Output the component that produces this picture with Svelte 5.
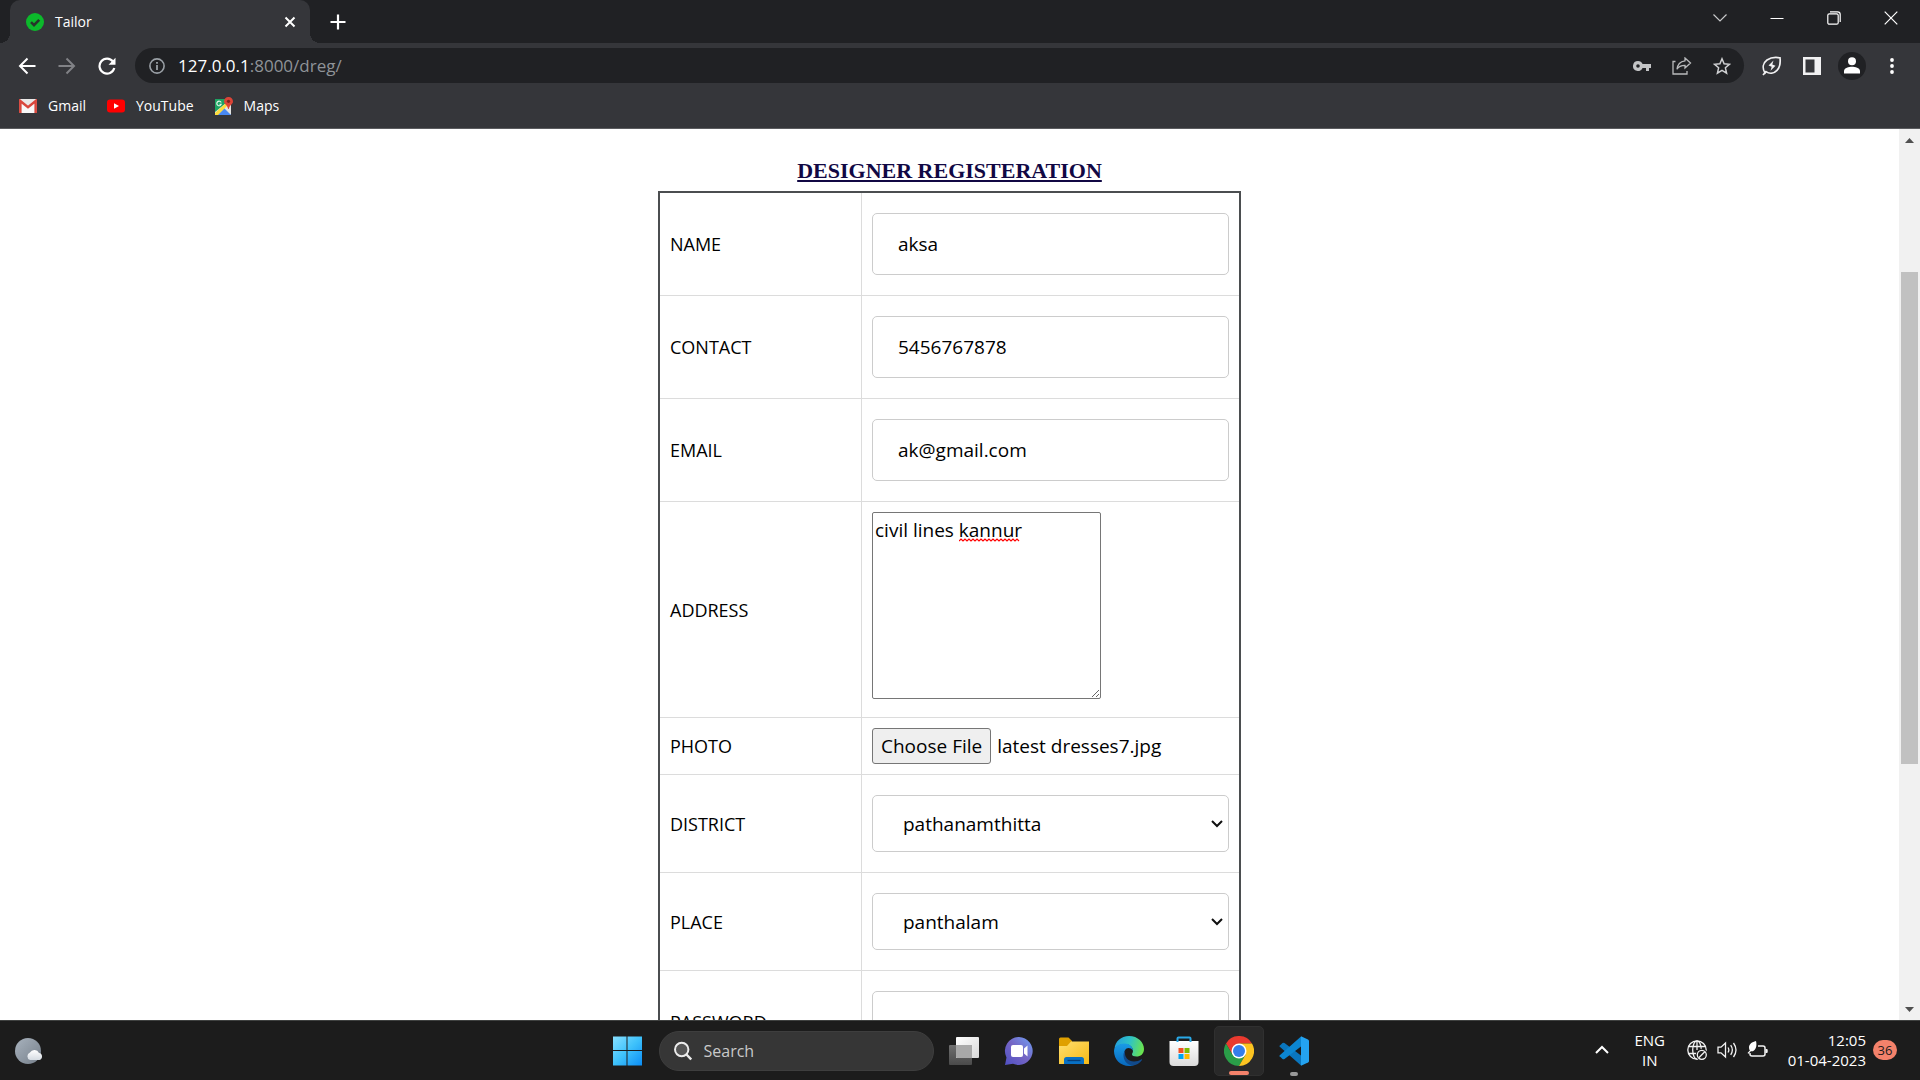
<script>
  import { onMount } from 'svelte';

  let name = $state('aksa');
  let contact = $state('5456767878');
  let email = $state('ak@gmail.com');
  let address = $state('civil lines kannur');
  let password = $state('');
  let fileInput;

  onMount(() => {
    const transfer = new DataTransfer();
    transfer.items.add(new File(['photo'], 'latest dresses7.jpg', { type: 'image/jpeg' }));
    fileInput.files = transfer.files;
  });
</script>

<div class="screen">
  <header class="browser">
    <div class="tabstrip">
      <div class="tab">
        <svg class="favicon" width="18" height="18" viewBox="0 0 18 18"><circle cx="9" cy="9" r="9" fill="#0cb92b" /><path d="M5 9.2l3 3 5.2-5.4" fill="none" stroke="#26352a" stroke-width="2.6" /></svg>
        <span class="tab-title">Tailor</span>
        <button class="plain close-tab" aria-label="Close tab"><svg width="12" height="12" viewBox="0 0 12 12"><path d="M1.500 1.500l9 9M10.500 1.500l-9 9" stroke="#fff" stroke-width="2" /></svg></button>
      </div>
      <button class="plain new-tab" aria-label="New tab"><svg width="16" height="16" viewBox="0 0 16 16"><path d="M8 .5v15M.5 8h15" stroke="#fff" stroke-width="2.200" /></svg></button>
      <div class="window-buttons">
        <button class="plain" aria-label="Search tabs"><svg width="14" height="8" viewBox="0 0 14 8"><path d="M.5.5L7 7 13.500.5" fill="none" stroke="#c8c9cb" stroke-width="1.200" /></svg></button>
        <button class="plain" aria-label="Minimize"><svg width="14" height="14" viewBox="0 0 14 14"><path d="M.5 7.500h13" stroke="#fff" /></svg></button>
        <button class="plain" aria-label="Restore"><svg width="14" height="14" viewBox="0 0 14 14" fill="none" stroke="#fff" stroke-width="1.200"><rect x=".8" y="2.800" width="10.400" height="10.400" rx="1.500" /><path d="M3 .8h7.500q2.700 0 2.700 2.700V11" /></svg></button>
        <button class="plain" aria-label="Close"><svg width="14" height="14" viewBox="0 0 14 14"><path d="M.7.7l12.600 12.600M13.300.7L.7 13.300" stroke="#fff" stroke-width="1.200" /></svg></button>
      </div>
    </div>

    <div class="toolbar">
      <div class="nav">
        <button class="plain" aria-label="Back"><svg width="18" height="18" viewBox="0 0 18 18"><path d="M9.500 1.500L2 9l7.500 7.500M2 9h15.500" fill="none" stroke="#fff" stroke-width="2" /></svg></button>
        <button class="plain" aria-label="Forward"><svg width="18" height="18" viewBox="0 0 18 18"><path d="M8.500 1.500L16 9l-7.500 7.500M16 9H.5" fill="none" stroke="#818286" stroke-width="2" /></svg></button>
        <button class="plain" aria-label="Reload"><svg width="18" height="18" viewBox="0 0 18 18"><path d="M15 4.500A7.500 7.500 0 1 0 16.300 11" fill="none" stroke="#fff" stroke-width="2.200" /><path d="M17.500.8v7h-7z" fill="#fff" /></svg></button>
      </div>
      <div class="address-bar">
        <svg width="16" height="16" viewBox="0 0 16 16"><circle cx="8" cy="8" r="7.100" fill="none" stroke="#9aa0a6" stroke-width="1.600" /><path d="M8 7v5M8 4v1.800" stroke="#9aa0a6" stroke-width="1.800" /></svg>
        <a class="url" href="#dreg"><span>127.0.0.1</span>:8000/dreg/</a>
        <div class="bar-icons">
          <button class="plain" aria-label="Passwords"><svg width="18" height="10" viewBox="0 0 18 10"><path fill="#c3c4c6" fill-rule="evenodd" d="M5 0a5 5 0 1 0 4.600 7H13v3h3V7h2V3H9.600A5 5 0 0 0 5 0zm0 3.200a1.800 1.800 0 1 1 0 3.600 1.800 1.800 0 0 1 0-3.600z" /></svg></button>
          <button class="plain" aria-label="Share"><svg width="20" height="18" viewBox="0 0 20 18" fill="none" stroke="#b9babc" stroke-width="1.300"><path d="M3.500 4.500H1V17h14v-3" /><path d="M13 1l5.500 5L13 11V8.300c-4 0-6.500 1.200-8 4 .4-4.500 3-7.800 8-8.500z" /></svg></button>
          <button class="plain" aria-label="Bookmark"><svg width="18" height="18" viewBox="0 0 18 18"><path d="M9 1.800l2.100 5 5.300.5-4 3.500 1.200 5.300L9 13.300l-4.600 2.800 1.200-5.300-4-3.500 5.300-.5z" fill="none" stroke="#cfd0d2" stroke-width="1.500" /></svg></button>
        </div>
      </div>
      <div class="actions">
        <button class="plain" aria-label="Energy saver"><svg width="20" height="20" viewBox="0 0 20 20" fill="none" stroke="#f1f1f2" stroke-width="1.700"><path d="M3 17C0 12 1 7 5 4c4-2.700 9-3 13-2.200.6 5 0 9.500-3 12.600-3 3.200-7.500 3.800-11 1.200z" /><path d="M1 19l3-3.500" /><path d="M11.500 4.500L6.500 9.500l3.200 1.200-1.200 4 5-5-3.200-1.200z" fill="#f1f1f2" stroke="none" /></svg></button>
        <button class="plain" aria-label="Side panel"><svg width="18" height="18" viewBox="0 0 18 18"><path fill="#f1f1f2" fill-rule="evenodd" d="M0 0h18v18H0zM2.500 2.500v13h9v-13z" /></svg></button>
        <button class="plain avatar" aria-label="Profile"><svg width="16" height="17" viewBox="0 0 16 17" fill="#fff"><circle cx="8" cy="4.300" r="4" /><path d="M0 16.500v-2.500c0-3 5-4.300 8-4.300s8 1.300 8 4.300v2.500z" /></svg></button>
        <button class="plain" aria-label="Menu"><svg width="4" height="16" viewBox="0 0 4 16" fill="#fff"><circle cx="2" cy="2" r="1.900" /><circle cx="2" cy="8" r="1.900" /><circle cx="2" cy="14" r="1.900" /></svg></button>
      </div>
    </div>

    <nav class="bookmarks">
      <a href="#gmail"><svg width="18" height="14" viewBox="0 0 18 14"><rect width="18" height="14" rx="1.500" fill="#e9e8e7" /><path d="M3 14V4l6 5 6-5v10z" fill="#f8f8f8" /><path d="M1.300 14V2L9 8.200 16.700 2v12" fill="none" stroke="#d9473d" stroke-width="2.500" /></svg>Gmail</a>
      <a href="#youtube"><svg width="18" height="14" viewBox="0 0 18 14"><rect width="18" height="13" y=".5" rx="3" fill="#f00" /><path d="M7 4.200v5.600L12 7z" fill="#fff" /></svg>YouTube</a>
      <a href="#maps"><svg width="18" height="18" viewBox="0 0 18 18"><rect y="2" width="16" height="16" rx="1" fill="#e3e3e1" /><path d="M0 2h11v4L0 15z" fill="#1da362" /><path d="M2 18l7-7 7 7z" fill="#4889f4" /><path d="M0 16L11 6l2 2L3 18H0z" fill="#fddc3c" /><path d="M6.200 5.500A2.300 2.300 0 1 0 6.300 7.200H4.500" fill="none" stroke="#e8f5ec" stroke-width="1.100" /><path d="M13.500 0A4.400 4.400 0 0 0 9 4.400c0 2.600 3.500 3.500 4.200 7.600h.6C14.500 7.900 18 7 18 4.400A4.400 4.400 0 0 0 13.500 0z" fill="#db4437" /><circle cx="13.500" cy="4.300" r="1.600" fill="#7b231d" /></svg>Maps</a>
    </nav>
  </header>

  <div class="viewport">
    <main>
      <h1>DESIGNER REGISTERATION</h1>
      <form>
        <table>
          <tbody>
            <tr><td><label for="name">NAME</label></td><td><input id="name" class="field" type="text" bind:value={name} /></td></tr>
            <tr><td><label for="contact">CONTACT</label></td><td><input id="contact" class="field" type="text" bind:value={contact} /></td></tr>
            <tr><td><label for="email">EMAIL</label></td><td><input id="email" class="field" type="text" bind:value={email} /></td></tr>
            <tr>
              <td><label for="address">ADDRESS</label></td>
              <td>
                <div class="area">
                  <textarea id="address" spellcheck="false" bind:value={address}></textarea>
                  <svg class="squiggle" width="61" height="4" viewBox="0 0 61 4"><path d="M0 3l2-2 2 2 2-2 2 2 2-2 2 2 2-2 2 2 2-2 2 2 2-2 2 2 2-2 2 2 2-2 2 2 2-2 2 2 2-2 2 2 2-2 2 2 2-2 2 2 2-2 2 2 2-2 2 2 2-2 2 2" fill="none" stroke="#f00" stroke-width="1.200" /></svg>
                </div>
              </td>
            </tr>
            <tr><td><label for="photo">PHOTO</label></td><td><input id="photo" type="file" bind:this={fileInput} /></td></tr>
            <tr>
              <td><label for="district">DISTRICT</label></td>
              <td><div class="select"><select id="district" class="field"><option>pathanamthitta</option></select><svg width="12" height="8" viewBox="0 0 12 8"><path d="M1 1l5 5 5-5" fill="none" stroke="#101010" stroke-width="2" /></svg></div></td>
            </tr>
            <tr>
              <td><label for="place">PLACE</label></td>
              <td><div class="select"><select id="place" class="field"><option>panthalam</option></select><svg width="12" height="8" viewBox="0 0 12 8"><path d="M1 1l5 5 5-5" fill="none" stroke="#101010" stroke-width="2" /></svg></div></td>
            </tr>
            <tr><td><label for="password">PASSWORD</label></td><td><input id="password" class="field" type="password" bind:value={password} /></td></tr>
          </tbody>
        </table>
      </form>
    </main>
    <div class="scrollbar">
      <svg class="arrow" width="21" height="21" viewBox="0 0 21 21"><path d="M6 14l4.500-5 4.500 5z" fill="#505050" /></svg>
      <div class="before"></div>
      <div class="thumb"></div>
      <div class="after"></div>
      <svg class="arrow" width="21" height="21" viewBox="0 0 21 21"><path d="M6 8l4.500 5L15 8z" fill="#505050" /></svg>
    </div>
  </div>

  <footer class="taskbar">
    <div class="widgets">
      <button class="plain" aria-label="Weather">
        <svg width="28" height="26" viewBox="0 0 28 26">
          <defs>
            <linearGradient id="moon" x1="0" y1="0" x2="1" y2="1"><stop offset="0" stop-color="#a8b2bd" /><stop offset="1" stop-color="#76808b" /></linearGradient>
            <linearGradient id="cloud" x1="0" y1="0" x2="0" y2="1"><stop offset="0" stop-color="#fff" /><stop offset="1" stop-color="#d5dbe2" /></linearGradient>
          </defs>
          <circle cx="13" cy="13" r="13" fill="url(#moon)" />
          <path d="M15 22a4 4 0 0 1 0-7.500 5 5 0 0 1 9 .5 3.600 3.600 0 0 1 .5 7z" fill="url(#cloud)" />
        </svg>
      </button>
    </div>

    <div class="apps">
      <button class="plain tile" aria-label="Start">
        <svg width="30" height="30" viewBox="0 0 30 30">
          <defs><linearGradient id="win" gradientUnits="userSpaceOnUse" x1="0" y1="0" x2="30" y2="30"><stop offset="0" stop-color="#8be1ff" /><stop offset=".5" stop-color="#3fc2fb" /><stop offset="1" stop-color="#0a8cf5" /></linearGradient></defs>
          <path fill="url(#win)" d="M1 .5h13.500V14H1zM15.500.5H30V14H15.500zM1 15h13.500v14.500H1zM15.500 15H30v14.500H15.500z" />
        </svg>
      </button>
      <label class="search">
        <svg width="18" height="20" viewBox="0 0 18 20"><circle cx="7.700" cy="8.500" r="6.700" fill="#555" stroke="#ececec" stroke-width="2" /><path d="M12.500 13.500l4.700 5" stroke="#ececec" stroke-width="2.400" /></svg>
        <input type="text" placeholder="Search" aria-label="Search" />
      </label>
      <button class="plain tile" aria-label="Task view">
        <svg width="30" height="30" viewBox="0 0 30 30">
          <defs>
            <linearGradient id="tv" x1="0" y1="0" x2="1" y2="1"><stop offset="0" stop-color="#fff" /><stop offset="1" stop-color="#d9d9d9" /></linearGradient>
            <linearGradient id="tv2" x1="0" y1="0" x2="0" y2="1"><stop offset="0" stop-color="#707070" /><stop offset="1" stop-color="#4a4a4a" /></linearGradient>
          </defs>
          <rect y="9" width="23" height="20" rx="1" fill="url(#tv2)" /><rect x="7" y="1" width="23" height="21" rx="1" fill="url(#tv)" /><path d="M7 9h16v13H8l-1-1z" fill="#a9a9a9" />
        </svg>
      </button>
      <button class="plain tile" aria-label="Chat">
        <svg width="30" height="30" viewBox="0 0 30 30">
          <defs><linearGradient id="chat" x1="0" y1="1" x2="1" y2="0"><stop offset="0" stop-color="#4f50c4" /><stop offset=".5" stop-color="#7565c4" /><stop offset="1" stop-color="#6fa0f5" /></linearGradient></defs>
          <path d="M15 1a14 14 0 1 1-6 26.800L1 29l1.500-7.500A14 14 0 0 1 15 1z" fill="url(#chat)" /><rect x="7" y="9" width="12" height="12" rx="2" fill="#fff" /><path d="M20 12.500L23.500 9.500v11L20 17.500z" fill="#fff" />
        </svg>
      </button>
      <button class="plain tile" aria-label="File Explorer">
        <svg width="30" height="30" viewBox="0 0 30 30">
          <defs><linearGradient id="folder" x1="0" y1="0" x2="1" y2="1"><stop offset="0" stop-color="#ffdf70" /><stop offset="1" stop-color="#f6b914" /></linearGradient></defs>
          <path d="M0 3q0-1.500 1.500-1.500h8L13 5v6H0z" fill="#dfa000" /><path d="M0 10h8l4-4.500h18V28H0z" fill="url(#folder)" /><path d="M5 28v-4.500Q5 21 7.500 21h15q2.500 0 2.500 2.500V28z" fill="#0870c4" /><path d="M8.500 24.500h13" stroke="#053e7a" stroke-width="1.300" />
        </svg>
      </button>
      <button class="plain tile" aria-label="Edge">
        <svg width="30" height="30" viewBox="0 0 30 30">
          <defs>
            <linearGradient id="edge1" x1="0" y1=".3" x2="1" y2=".5"><stop offset="0" stop-color="#249edc" /><stop offset=".5" stop-color="#2fc3c6" /><stop offset="1" stop-color="#6be44c" /></linearGradient>
            <linearGradient id="edge2" x1="0" y1="0" x2="0" y2="1"><stop offset="0" stop-color="#1a9be6" /><stop offset="1" stop-color="#0868bd" /></linearGradient>
          </defs>
          <path d="M.5 13C1 5.500 7 0 15 0c9 0 15 6.500 15 13 0 5-3.500 7.500-7.500 7.500-3 0-4.500-1-4.500-2.300 0-.8 1-1.200 1-3.400C19 11 15.500 8 10.500 8 6 8 2.500 10 .5 13z" fill="url(#edge1)" />
          <path d="M0 15c0-4.500 5-7.500 10.500-7.500 5 0 8.500 3.500 8.500 7.200-1-2-3-2.700-4.500-2.700-3 0-4.500 3-4.500 6.500C10 24 14 28.500 20 29c-1.500.7-3 1-5 1C6.500 30 0 23.500 0 15z" fill="url(#edge2)" />
          <path d="M11.300 14.500C9.500 21 14.500 25.500 20 25.500c3 0 5-.8 7.500-2.200.6-.2.8.2.5.8-2.200 3.300-6 5.400-9 5.400C13 29 9.500 24.500 9.500 19.500c0-2 .5-4 1.800-5z" fill="#114a8b" />
        </svg>
      </button>
      <button class="plain tile" aria-label="Microsoft Store">
        <svg width="30" height="30" viewBox="0 0 30 30">
          <defs><linearGradient id="store" x1="0" y1="0" x2="0" y2="1"><stop offset="0" stop-color="#fff" /><stop offset="1" stop-color="#dadada" /></linearGradient></defs>
          <path d="M.5 5h29v21q0 4-4 4h-21q-4 0-4-4z" fill="url(#store)" /><path d="M8.500 6V2.500q0-1 1-1h11q1 0 1 1V6" fill="none" stroke="#29a9e8" stroke-width="2" /><path d="M9.500 12h5v5h-5z" fill="#f25022" /><path d="M15.500 12h5v5h-5z" fill="#7fba00" /><path d="M9.500 18h5v5h-5z" fill="#00a4ef" /><path d="M15.500 18h5v5h-5z" fill="#ffb900" />
        </svg>
      </button>
      <button class="plain tile active" aria-label="Chrome">
        <svg width="30" height="30" viewBox="0 0 30 30">
          <path d="M2 7.500A15 15 0 0 1 28 7.500H15l-6.500 11.200z" fill="#ea3a2f" /><path d="M2 7.500A15 15 0 0 0 15 30l6.500-11.300h-13z" fill="#2a9d48" /><path d="M28 7.500A15 15 0 0 1 15 30l6.500-11.300L15 7.500z" fill="#fcc421" /><circle cx="15" cy="15" r="7.500" fill="#fff" /><circle cx="15" cy="15" r="6" fill="#347eec" />
        </svg>
      </button>
      <button class="plain tile running" aria-label="Visual Studio Code">
        <svg width="30" height="30" viewBox="0 0 30 30">
          <path d="M1.500 9L3.500 7q1-.6 2 0L22 19.500V29.500L.5 10.500q-.5-1 1-1.500z" fill="#0a76be" /><path d="M1.500 21l2 2q1 .6 2 0L22 10.500V.5L.5 19.500q-.5 1 1 1.500z" fill="#0c86d1" /><path d="M22 .3l7 3.200q1 .5 1 1.500v20q0 1-1 1.500l-7 3.200z" fill="#24a3f0" />
        </svg>
      </button>
    </div>

    <div class="tray">
      <button class="plain chevron" aria-label="Show hidden icons"><svg width="14" height="9" viewBox="0 0 14 9"><path d="M1 8l6-6 6 6" fill="none" stroke="#fff" stroke-width="2" /></svg></button>
      <button class="plain lang"><span>ENG</span><span>IN</span></button>
      <button class="plain status" aria-label="Quick settings">
        <svg width="20" height="20" viewBox="0 0 20 20" fill="none" stroke="#f2f2f2" stroke-width="1.300"><circle cx="10" cy="10" r="9.200" /><ellipse cx="10" cy="10" rx="4.300" ry="9.200" /><path d="M1.500 6.500h17M1.500 13.500h9M10 1v9" /><circle cx="14.800" cy="14.800" r="6" fill="#1c1c1c" stroke="none" /><circle cx="14.800" cy="14.800" r="4.500" /><path d="M11.800 17.800l6-6" /></svg>
        <svg width="20" height="18" viewBox="0 0 20 18" fill="none" stroke="#f2f2f2" stroke-width="1.300"><path d="M1 6.200h3L8.500 2v14L4 11.800H1z" /><path d="M11 6.500q1.700 2.500 0 5M13.700 4.200q3.300 4.800 0 9.600M16.500 2q5 7 0 14" /></svg>
        <svg width="21" height="18" viewBox="0 0 21 18"><path d="M11 5h5q2 0 2 2v6q0 2-2 2H5q-2 0-2-2v-1" fill="none" stroke="#f2f2f2" stroke-width="1.500" /><path d="M18.500 8h1.200q1 0 1 1v2q0 1-1 1h-1.200z" fill="#f2f2f2" /><path d="M9 0C5 1 2 3 2 6.500c0 1.300.3 2.200.9 2.900L.5 12l1 .8 2.300-2.500C8 11 10.500 6 9 0z" fill="#fff" /></svg>
      </button>
      <button class="plain clock"><span>12:05</span><span>01-04-2023</span></button>
      <span class="badge">36</span>
    </div>
  </footer>
</div>

<style>
  :global(body) {
    margin: 0;
  }
  .screen {
    display: flex;
    flex-direction: column;
    height: 100vh;
    overflow: hidden;
    font-family: 'Open Sans', 'Noto Sans', sans-serif;
  }
  .plain {
    display: flex;
    align-items: center;
    justify-content: center;
    margin: 0;
    padding: 0;
    border: 0;
    background: none;
    color: inherit;
    font: inherit;
  }
  svg {
    display: block;
    flex: none;
  }

  /* Browser chrome */
  .browser {
    flex: none;
    border-bottom: 1px solid #5b5c5f;
    background: #35363a;
    color: #fff;
  }
  .tabstrip {
    display: flex;
    height: 43px;
    padding: 0 1px 0 10px;
    background: #202124;
  }
  .tab {
    position: relative;
    display: flex;
    align-items: center;
    box-sizing: border-box;
    width: 300px;
    padding: 0 14px 0 16px;
    border-radius: 10px 10px 0 0;
    background: #35363a;
    font-size: 14px;
  }
  /* Flared corners at the foot of the active tab */
  .tab::before,
  .tab::after {
    content: '';
    position: absolute;
    bottom: 0;
    width: 10px;
    height: 10px;
  }
  .tab::before {
    left: -10px;
    background: radial-gradient(circle at 0 0, #202124 10px, #35363a 10px);
  }
  .tab::after {
    right: -10px;
    background: radial-gradient(circle at 100% 0, #202124 10px, #35363a 10px);
  }
  .tab-title {
    flex: 1;
    padding-left: 11px;
  }
  .new-tab {
    width: 55px;
  }
  .window-buttons {
    display: flex;
    height: 36px;
    margin-left: auto;
  }
  .window-buttons button {
    width: 57px;
  }
  .toolbar {
    display: flex;
    align-items: center;
    height: 45px;
    padding: 0 8px 0 7px;
  }
  .nav {
    display: flex;
    padding-right: 8px;
  }
  .nav button {
    width: 40px;
    height: 35px;
  }
  .address-bar {
    display: flex;
    flex: 1;
    align-items: center;
    height: 35px;
    padding: 0 13px 0 14px;
    border-radius: 18px;
    background: #202124;
  }
  .url {
    flex: 1;
    padding-left: 13px;
    color: #8f9398;
    font-size: 17px;
    text-decoration: none;
  }
  .url span {
    color: #fff;
  }
  .bar-icons {
    display: flex;
    gap: 21px;
  }
  .actions {
    display: flex;
    flex: none;
    align-items: center;
    padding-left: 8px;
  }
  .actions button {
    width: 40px;
    height: 28px;
  }
  .actions .avatar {
    width: 28px;
    margin: 0 6px;
    border-radius: 50%;
    background: #202124;
  }
  .bookmarks {
    display: flex;
    gap: 21px;
    height: 40px;
    padding-left: 19px;
    font-size: 14px;
  }
  .bookmarks a {
    display: flex;
    align-items: center;
    gap: 11px;
    height: 35px;
    color: #fff;
    text-decoration: none;
  }

  /* Page */
  .viewport {
    display: flex;
    flex: 1;
    min-height: 0;
    background: #fff;
  }
  main {
    flex: 1;
    overflow: hidden;
    padding-top: 28px;
    color: #000;
    font-size: 18px;
  }
  h1 {
    margin: 0 0 6px;
    color: #110844;
    font: bold 22px/28px 'Liberation Serif', serif;
    text-align: center;
    text-decoration: underline;
    text-decoration-thickness: 2px;
    text-underline-offset: 2px;
  }
  table {
    width: 583px;
    margin: 0 auto;
    border: 2px solid #4b4e50;
    border-collapse: collapse;
  }
  td {
    height: 36px;
    padding: 10px;
    border: 1px solid #dcdcdc;
    vertical-align: middle;
  }
  td:first-child {
    width: 181px;
  }
  .field {
    display: block;
    box-sizing: border-box;
    width: 100%;
    height: 62px;
    margin: 10px 0;
    padding: 0 25px;
    border: 1px solid #ccc;
    border-radius: 5px;
    background: #fff;
    color: #000;
    font: inherit;
    font-size: 19px;
  }
  .select {
    display: grid;
    align-items: center;
    justify-items: end;
  }
  .select > * {
    grid-area: 1 / 1;
  }
  .select svg {
    margin-right: 6px;
    pointer-events: none;
  }
  select.field {
    height: 57px;
    padding: 0 30px;
    appearance: none;
  }
  .area {
    position: relative;
    height: 195px;
  }
  textarea {
    display: block;
    box-sizing: border-box;
    width: 229px;
    height: 187px;
    padding: 2px;
    border: 1px solid #767676;
    border-radius: 2px;
    background: #fff;
    color: #000;
    font: inherit;
    font-size: 19px;
    line-height: 30px;
  }
  .squiggle {
    position: absolute;
    top: 26px;
    left: 87px;
  }
  input[type='file'] {
    display: block;
    width: 100%;
    height: 36px;
    font: inherit;
    font-size: 19px;
  }
  input[type='file']::file-selector-button {
    box-sizing: border-box;
    height: 36px;
    margin-right: 6px;
    padding: 0 8px;
    border: 1px solid #767676;
    border-radius: 3px;
    background: #efefef;
    color: #000;
    font: inherit;
  }
  .scrollbar {
    display: flex;
    flex-direction: column;
    width: 21px;
    background: #f1f1f1;
  }
  .before {
    flex: 122;
  }
  .thumb {
    flex: 492;
    margin: 0 2px;
    background: #c1c1c1;
  }
  .after {
    flex: 235;
  }

  /* Taskbar */
  .taskbar {
    display: grid;
    grid-template-columns: 1fr auto 1fr;
    align-items: center;
    flex: none;
    box-sizing: border-box;
    height: 60px;
    border-top: 1px solid #3f4140;
    background: #1c1c1c;
    color: #fff;
  }
  .widgets {
    padding-left: 15px;
  }
  .apps {
    display: flex;
    align-items: center;
    gap: 5px;
  }
  .tile {
    position: relative;
    box-sizing: border-box;
    width: 50px;
    height: 50px;
    border-radius: 5px;
  }
  .active {
    border: 1px solid #303030;
    background: #292929;
  }
  .active::after,
  .running::after {
    content: '';
    position: absolute;
    bottom: 0;
    left: 50%;
    width: 8px;
    height: 4px;
    margin-left: -4px;
    border-radius: 2px;
    background: #999;
  }
  .active::after {
    width: 20px;
    margin-left: -10px;
    background: #f4826b;
  }
  .search {
    display: flex;
    align-items: center;
    gap: 12px;
    box-sizing: border-box;
    width: 275px;
    height: 40px;
    margin-left: 2px;
    padding: 0 14px;
    border: 1px solid #3e3e3e;
    border-radius: 20px;
    background: #363636;
  }
  .search input {
    flex: 1;
    min-width: 0;
    padding: 0;
    border: 0;
    outline: 0;
    background: none;
    color: #fff;
    font: inherit;
    font-size: 16px;
  }
  .search input::placeholder {
    color: #c9c9c9;
    opacity: 1;
  }
  .tray {
    display: flex;
    align-items: center;
    justify-content: flex-end;
    padding: 0 23px 2px 0;
    font-size: 15px;
    line-height: 20px;
  }
  .lang {
    flex-direction: column;
    width: 30px;
    margin: 0 22px 0 26px;
  }
  .status {
    gap: 10px;
    width: 81px;
  }
  .clock {
    flex-direction: column;
    align-items: flex-end;
    margin: 0 7px 0 20px;
  }
  .badge {
    width: 24px;
    border-radius: 10px;
    background: #f4826b;
    color: #1c1c1c;
    font-size: 13px;
    text-align: center;
  }
</style>
